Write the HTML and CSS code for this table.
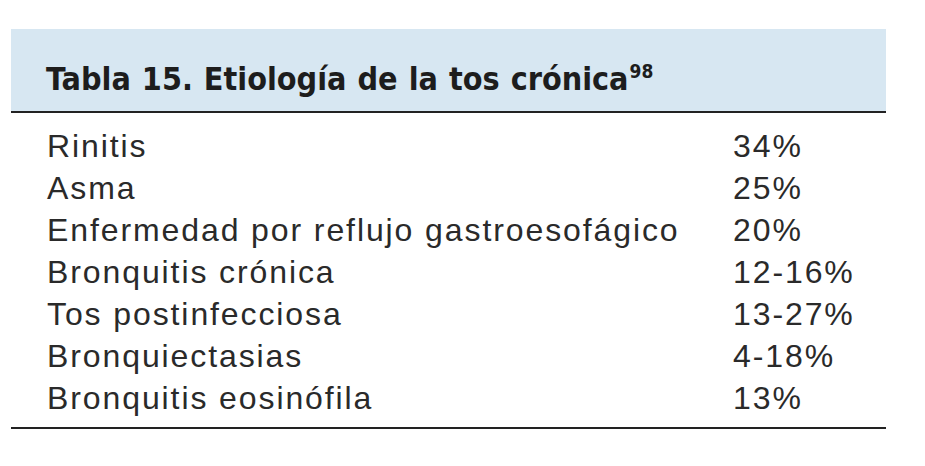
FILE: index.html
```html
<!DOCTYPE html>
<html lang="es">
<head>
<meta charset="utf-8">
<link rel="stylesheet" href="styles.css">
</head>
<body>
<div class="table">
  <div class="head"><h1 class="title">Tabla 15. Etiología de la tos crónica<sup>98</sup></h1></div>
  <div class="rows">
    <div class="row"><span class="name">Rinitis</span><span class="val">34%</span></div>
    <div class="row"><span class="name">Asma</span><span class="val">25%</span></div>
    <div class="row"><span class="name">Enfermedad por reflujo gastroesofágico</span><span class="val">20%</span></div>
    <div class="row"><span class="name">Bronquitis crónica</span><span class="val">12-16%</span></div>
    <div class="row"><span class="name">Tos postinfecciosa</span><span class="val">13-27%</span></div>
    <div class="row"><span class="name">Bronquiectasias</span><span class="val">4-18%</span></div>
    <div class="row"><span class="name">Bronquitis eosinófila</span><span class="val">13%</span></div>
  </div>
</div>
</body>
</html>
```
FILE: styles.css
```css
html, body { margin: 0; padding: 0; background: #fff; }
.table {
  margin: 29px 0 0 11px;
  width: 875px;
  border-bottom: 2px solid #222;
}
.head {
  background: #d7e7f2;
  height: 82px;
  border-bottom: 2px solid #222;
  display: flex;
  align-items: flex-end;
}
.title {
  margin: 0 0 16px 35px;
  font-family: "DejaVu Sans Condensed", "DejaVu Sans", sans-serif;
  font-weight: bold;
  font-size: 32px;
  letter-spacing: 0;
  word-spacing: 1px;
  color: #1d1d1d;
  line-height: 1;
}
.title sup { font-size: 19px; vertical-align: 12px; line-height: 0; margin-left: 1px; }
.rows { padding: 12px 0 8px 0; }
.row {
  display: flex;
  height: 42px;
  align-items: center;
  font-family: "Liberation Sans", Arial, sans-serif;
  font-size: 32px;
  letter-spacing: 1.9px;
  color: #2a2a2a;
}
.name { width: 722px; padding-left: 36px; box-sizing: border-box; }
```
